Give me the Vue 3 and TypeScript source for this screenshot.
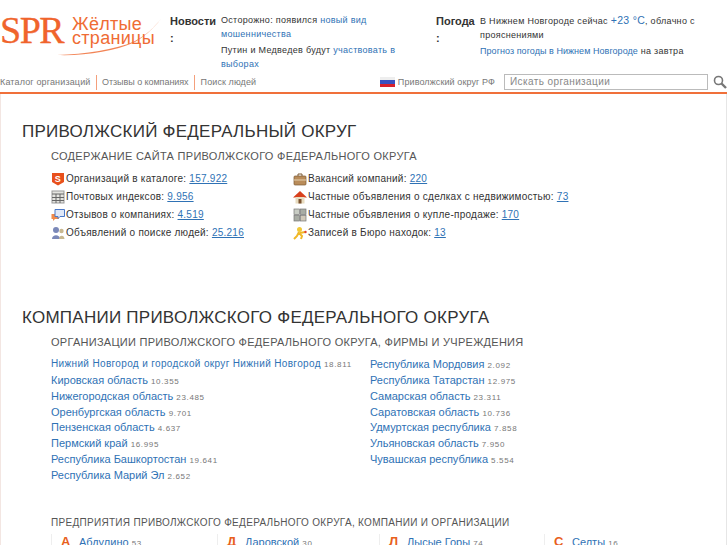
<script setup lang="ts">
const leftStats = [
  { icon: 's', label: 'Организаций в каталоге:', value: '157.922' },
  { icon: 'zip', label: 'Почтовых индексов:', value: '9.956' },
  { icon: 'chat', label: 'Отзывов о компаниях:', value: '4.519' },
  { icon: 'people', label: 'Объявлений о поиске людей:', value: '25.216' },
]
const rightStats = [
  { icon: 'case', label: 'Вакансий компаний:', value: '220' },
  { icon: 'house', label: 'Частные объявления о сделках с недвижимостью:', value: '73' },
  { icon: 'grid', label: 'Частные объявления о купле-продаже:', value: '170' },
  { icon: 'key', label: 'Записей в Бюро находок:', value: '13' },
]
const regionsLeft = [
  ['Нижний Новгород и городской округ Нижний Новгород', '18.811'],
  ['Кировская область', '10.355'],
  ['Нижегородская область', '23.485'],
  ['Оренбургская область', '9.701'],
  ['Пензенская область', '4.637'],
  ['Пермский край', '16.995'],
  ['Республика Башкортостан', '19.641'],
  ['Республика Марий Эл', '2.652'],
]
const regionsRight = [
  ['Республика Мордовия', '2.092'],
  ['Республика Татарстан', '12.975'],
  ['Самарская область', '23.311'],
  ['Саратовская область', '10.736'],
  ['Удмуртская республика', '7.858'],
  ['Ульяновская область', '7.950'],
  ['Чувашская республика', '5.554'],
]
const towns = [
  ['А', 'Абдулино', '53'],
  ['Д', 'Даровской', '30'],
  ['Л', 'Лысые Горы', '74'],
  ['С', 'Селты', '16'],
]
</script>

<template>
  <div class="page">
    <header class="head">
      <div class="top">
        <div class="logo">
          <span class="spr">SPR</span>
          <span class="yp">Жёлтые<br />страницы</span>
          <svg class="swoosh" width="110" height="46" viewBox="0 0 110 46">
            <path d="M2 41C30 40 60 36 80 27C92 21 100 12 106 5C98 15 88 24 78 29C60 37 30 42 2 41Z" fill="#f0703a" fill-opacity="0.85" />
          </svg>
        </div>
        <div class="info news">
          <b class="ttl">Новости :</b>
          <div class="txt">
            <p>Осторожно: появился <a>новый вид мошенничества</a></p>
            <p>Путин и Медведев будут <a>участвовать в выборах</a></p>
          </div>
        </div>
        <div class="info weather">
          <b class="ttl">Погода :</b>
          <div class="txt">
            <p>В Нижнем Новгороде сейчас <a class="big">+23 °C</a>, облачно с прояснениями</p>
            <p><a class="wlink">Прогноз погоды в Нижнем Новгороде</a> на завтра</p>
          </div>
        </div>
      </div>
      <div class="nav">
        <a class="tab">Каталог организаций</a>
        <a class="tab">Отзывы о компаниях</a>
        <a class="tab">Поиск людей</a>
        <span class="fill"></span>
        <span class="flag"><i></i><i></i><i></i></span>
        <span class="region">Приволжский округ РФ</span>
        <div class="search">Искать организации</div>
        <svg class="lens" width="14" height="14" viewBox="0 0 14 14">
          <circle cx="5.5" cy="5.5" r="4" fill="none" stroke="#777" stroke-width="1.6" />
          <path d="M8.5 8.5L13 13" stroke="#777" stroke-width="2.4" />
        </svg>
      </div>
    </header>

    <main class="main">
      <h1>ПРИВОЛЖСКИЙ ФЕДЕРАЛЬНЫЙ ОКРУГ</h1>
      <h2 class="first">СОДЕРЖАНИЕ САЙТА ПРИВОЛЖСКОГО ФЕДЕРАЛЬНОГО ОКРУГА</h2>
      <div class="stats">
        <ul class="col-a">
          <li v-for="s in leftStats" :key="s.icon">
            <svg class="ic" width="14" height="14" viewBox="0 0 14 14">
              <template v-if="s.icon === 's'">
                <path d="M1 1H13V10L7 13.5L1 10Z" fill="#e8501c" />
                <text x="7" y="10" text-anchor="middle" font-size="9" font-weight="700" fill="#fff" font-family="Liberation Sans">S</text>
              </template>
              <template v-else-if="s.icon === 'zip'">
                <rect x="1" y="1" width="12" height="12" fill="#e4e4e0" stroke="#999" />
                <path d="M1 4H13M1 7.5H13M1 10.500H13M5 4V13M9 4V13" stroke="#666" />
              </template>
              <template v-else-if="s.icon === 'chat'">
                <path d="M0.500 6H8V11H4L2 13V11H0.500Z" fill="#f08a4a" />
                <path d="M4 1.500H13.500V8.500H9L7 10.500V8.500H4Z" fill="#dfe8f8" stroke="#4a78c8" />
              </template>
              <template v-else>
                <circle cx="5" cy="4" r="3" fill="#7b88b8" />
                <path d="M1 13C1 8 9 8 9 13Z" fill="#7b88b8" />
                <circle cx="10.500" cy="5" r="2.200" fill="#c8b890" />
                <path d="M8 13C8 8.500 13.500 8.500 13.500 13Z" fill="#c8b890" />
              </template>
            </svg>
            <span>{{ s.label }}</span><a class="num">{{ s.value }}</a>
          </li>
        </ul>
        <ul class="col-b">
          <li v-for="s in rightStats" :key="s.icon">
            <svg class="ic" width="14" height="14" viewBox="0 0 14 14">
              <template v-if="s.icon === 'case'">
                <rect x="1" y="4" width="12" height="9" rx="1" fill="#b98c5a" stroke="#7d5a34" stroke-width="0.700" />
                <path d="M5 4V2H9V4" fill="none" stroke="#7d5a34" />
                <path d="M1 8H13" stroke="#e6d2b0" />
              </template>
              <template v-else-if="s.icon === 'house'">
                <path d="M7 1L14 7.500H0Z" fill="#d8401c" />
                <rect x="2.500" y="7" width="9" height="6.500" fill="#e8dcc0" />
                <rect x="5.500" y="9" width="3" height="4.500" fill="#7a5230" />
              </template>
              <template v-else-if="s.icon === 'grid'">
                <rect x="1" y="1" width="5.500" height="5.500" fill="#c8ccc4" stroke="#777" stroke-width="0.700" />
                <rect x="7.500" y="1" width="5.500" height="5.500" fill="#a8aca4" stroke="#777" stroke-width="0.700" />
                <rect x="1" y="7.500" width="5.500" height="5.500" fill="#a8aca4" stroke="#777" stroke-width="0.700" />
                <rect x="7.500" y="7.500" width="5.500" height="5.500" fill="#d0c8b8" stroke="#777" stroke-width="0.700" />
              </template>
              <template v-else>
                <circle cx="6.500" cy="3.500" r="2.500" fill="#f0c838" />
                <path d="M6 6L4 10L1 13M6 7L9 10L8 13M7 7L12 6" fill="none" stroke="#f0b828" stroke-width="2" />
                <circle cx="12.500" cy="6" r="1.200" fill="#e04030" />
              </template>
            </svg>
            <span>{{ s.label }}</span><a class="num">{{ s.value }}</a>
          </li>
        </ul>
      </div>

      <h1 class="second">КОМПАНИИ ПРИВОЛЖСКОГО ФЕДЕРАЛЬНОГО ОКРУГА</h1>
      <h2 class="org">ОРГАНИЗАЦИИ ПРИВОЛЖСКОГО ФЕДЕРАЛЬНОГО ОКРУГА, ФИРМЫ И УЧРЕЖДЕНИЯ</h2>
      <div class="regions">
        <ul class="reg-a">
          <li v-for="r in regionsLeft" :key="r[0]"><a>{{ r[0] }}</a> <small>{{ r[1] }}</small></li>
        </ul>
        <ul class="reg-b">
          <li v-for="r in regionsRight" :key="r[0]"><a>{{ r[0] }}</a> <small>{{ r[1] }}</small></li>
        </ul>
      </div>

      <h2 class="third">ПРЕДПРИЯТИЯ ПРИВОЛЖСКОГО ФЕДЕРАЛЬНОГО ОКРУГА, КОМПАНИИ И ОРГАНИЗАЦИИ</h2>
      <div class="towns">
        <div v-for="t in towns" :key="t[0]" class="town">
          <b>{{ t[0] }}</b><a>{{ t[1] }}</a> <small>{{ t[2] }}</small>
        </div>
      </div>
    </main>
  </div>
</template>

<style>
html, body { margin: 0; height: 100%; overflow: hidden; background: #fff; }
</style>

<style scoped>
.page { width: 727px; height: 545px; overflow: hidden; font-family: "Liberation Sans", Arial, sans-serif; font-size: 9px; letter-spacing: 0.3px; color: #333; }
a { color: #2f72b5; }
p { margin: 0; }
ul { margin: 0; padding: 0; list-style: none; }
.top { display: flex; height: 72px; }
.logo { position: relative; width: 170px; padding-top: 9px; flex: none; display: flex; box-sizing: border-box; }
.spr { width: 62px; font-family: "Liberation Serif", serif; font-size: 38px; line-height: 42px; letter-spacing: -1.5px; color: #f0642c; -webkit-text-stroke: 0.3px #f0642c; }
.yp { margin: 8px 0 0 10px; font-size: 18px; line-height: 14px; letter-spacing: 0.3px; color: #ef6c34; }
.swoosh { position: absolute; left: 55px; top: 14px; }
.info { display: flex; padding-top: 13px; }
.news { width: 266px; }
.weather { flex: 1; padding-right: 24px; }
.ttl { flex: none; font-size: 11px; line-height: 17px; letter-spacing: 0; color: #333; }
.news .ttl { width: 45px; margin-right: 6px; }
.weather .ttl { width: 40px; margin-right: 4px; }
.txt p { line-height: 14px; margin-bottom: 2px; }
.big { font-size: 10.500px; }
.wlink { letter-spacing: 0.05px; }
.nav { display: flex; align-items: center; height: 20px; border-bottom: 2px solid #f0703a; letter-spacing: 0.15px; }
.tab { color: #777; padding: 0 5px; line-height: 15px; border-right: 1px solid #f4a07c; }
.tab:first-child { padding-left: 0; padding-right: 5.500px; }
.tab:nth-child(2) { letter-spacing: -0.05px; }
.tab:nth-child(3) { border: 0; padding-left: 6px; letter-spacing: 0.1px; }
.fill { flex: 1; }
.flag { width: 15px; height: 10px; display: flex; flex-direction: column; margin-right: 3px; }
.flag i { flex: 1; }
.flag i:nth-child(1) { background: #eee; }
.flag i:nth-child(2) { background: #3a50c0; }
.flag i:nth-child(3) { background: #d8202c; }
.region { margin-right: 9px; color: #777; letter-spacing: 0.1px; }
.search { box-sizing: border-box; width: 204px; height: 16px; border: 1px solid #bbb; line-height: 14px; padding-left: 5px; color: #888; font-size: 10px; letter-spacing: 0.4px; }
.lens { margin-left: 5px; }
.main { padding: 27px 0 0 21px; border-left: 1px solid #f3e6e2; border-right: 1px solid #e6e6e6; height: 450px; }
h1 { margin: 0; font-size: 17px; font-weight: 400; line-height: 22px; letter-spacing: 0.25px; color: #333; }
h2 { margin: 5px 0 0 29px; font-size: 11px; font-weight: 400; line-height: 16px; letter-spacing: 0.3px; color: #555; }
.stats { display: flex; margin: 6px 0 0 29px; font-size: 10px; letter-spacing: 0.25px; color: #333; }
.stats li { height: 18px; line-height: 18px; white-space: nowrap; display: flex; align-items: center; }
.ic { margin-right: 1px; flex: none; }
.col-a { width: 242px; }
.num { text-decoration: underline; margin-left: 3px; }
.second { margin-top: 65px; }
.org { margin-top: 5px; letter-spacing: 0.27px; }
.regions { display: flex; margin: 6px 0 0 29px; font-size: 11px; letter-spacing: 0; }
.regions li { height: 15.850px; line-height: 16px; white-space: nowrap; }
.reg-a li:first-child { font-size: 10px; letter-spacing: 0.35px; }
.reg-a { width: 319px; }
small { font-size: 8px; letter-spacing: 0.65px; color: #777; }
.third { margin-top: 32px; font-size: 10px; }
.towns { display: flex; margin: 3px 0 0 29px; font-size: 11px; letter-spacing: 0; }
.town { box-sizing: border-box; white-space: nowrap; padding-left: 9px; border-left: 1px solid #eee; }
.town:nth-child(1) { width: 166px; }
.town:nth-child(2) { width: 162px; }
.town:nth-child(3) { width: 165px; }
.town b { display: inline-block; width: 18px; color: #e8601c; font-size: 13px; }
</style>
